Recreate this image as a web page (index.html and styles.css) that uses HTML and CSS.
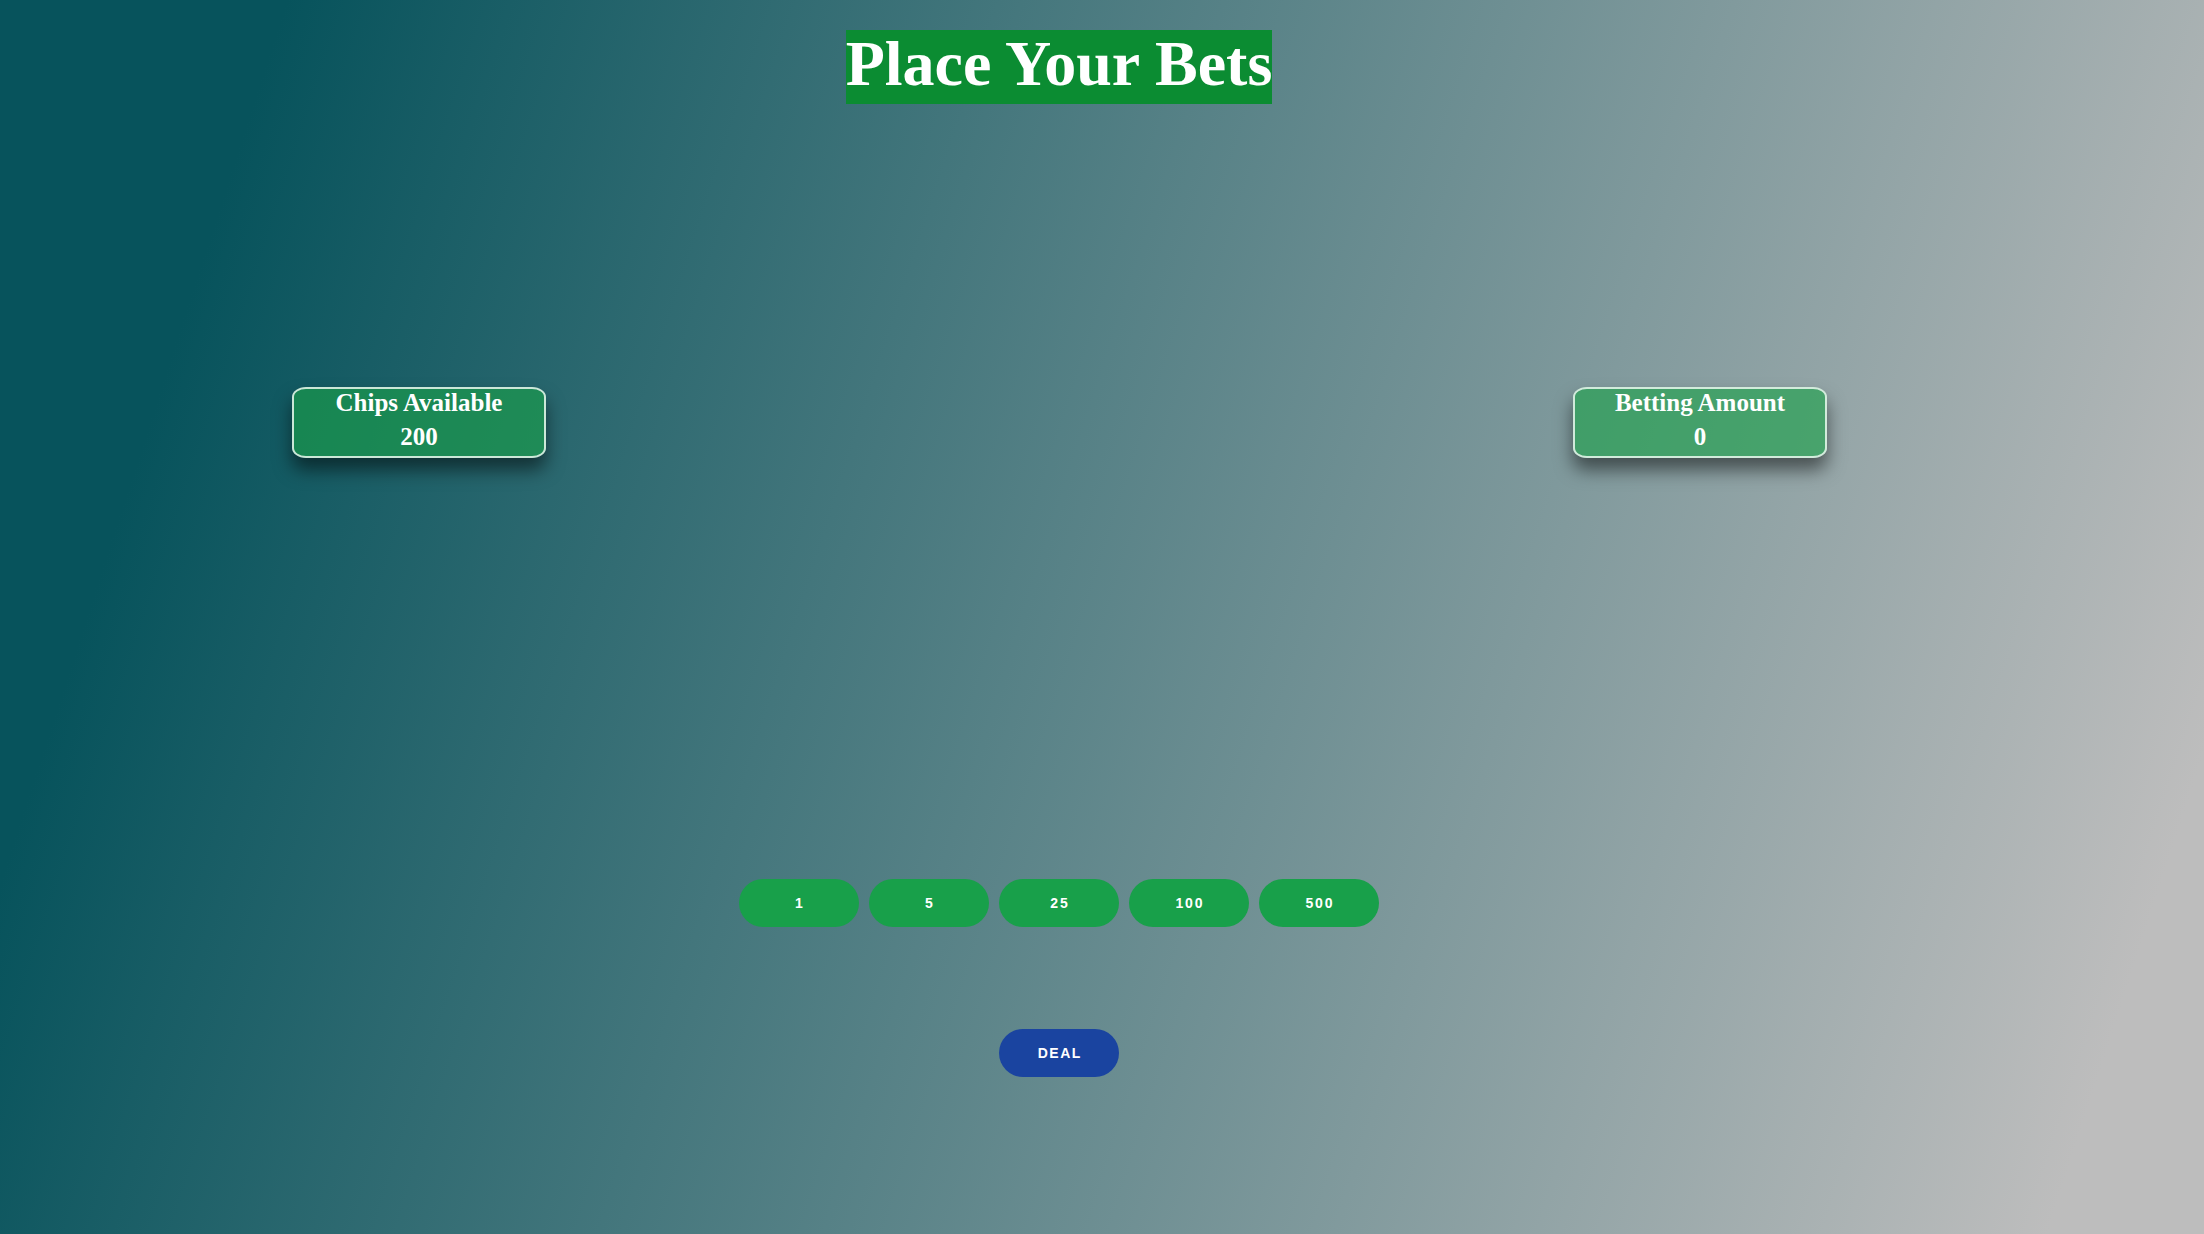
FILE: index.html
```html
<!DOCTYPE html>
<html lang="en">
<head>
<meta charset="utf-8">
<title>Place Your Bets</title>
<link rel="stylesheet" href="styles.css">
</head>
<body>
<main class="table">
  <h1 class="title">Place Your Bets</h1>
  <section class="stats">
    <div class="stat">
      <div class="stat-label">Chips Available</div>
      <div class="stat-value">200</div>
    </div>
    <div class="stat">
      <div class="stat-label">Betting Amount</div>
      <div class="stat-value">0</div>
    </div>
  </section>
  <section class="chips">
    <button class="chip">1</button>
    <button class="chip">5</button>
    <button class="chip">25</button>
    <button class="chip">100</button>
    <button class="chip">500</button>
  </section>
  <section class="actions">
    <button class="deal">DEAL</button>
  </section>
</main>
</body>
</html>
```

FILE: styles.css
```css
html, body {
  margin: 0;
  padding: 0;
}

body {
  min-height: 100vh;
  background: linear-gradient(108deg, #07535c 11%, #bdbdbd 94%);
  font-family: "Liberation Sans", Arial, sans-serif;
}

.table {
  width: 2118px;
  display: flex;
  flex-direction: column;
  align-items: center;
}

.title {
  margin: 30px 0 0;
  padding: 0 0 7px;
  background: #0b8c32;
  color: #ffffff;
  font-family: "Liberation Serif", "Times New Roman", serif;
  font-weight: bold;
  font-size: 64px;
  line-height: 67px;
  white-space: nowrap;
}

.stats {
  align-self: stretch;
  display: flex;
  justify-content: space-between;
  padding: 0 291px 0 292px;
  margin-top: 283px;
}

.stat {
  box-sizing: border-box;
  width: 254px;
  height: 71px;
  border: 2px solid rgba(235, 248, 240, 0.85);
  border-radius: 14px / 10px;
  background: rgba(26, 161, 73, 0.62);
  box-shadow: 0 12px 18px rgba(0, 0, 0, 0.5);
  color: #ffffff;
  font-family: "Liberation Serif", "Times New Roman", serif;
  font-weight: bold;
  font-size: 25px;
  text-align: center;
}

.stat-label {
  line-height: 28px;
}

.stat-value {
  line-height: 39px;
}

.chips {
  display: flex;
  gap: 10px;
  margin-top: 421px;
}

.chip,
.deal {
  width: 120px;
  height: 48px;
  border: none;
  border-radius: 24px;
  padding: 0;
  color: #ffffff;
  font-family: "Liberation Sans", Arial, sans-serif;
  font-weight: bold;
  font-size: 14px;
  letter-spacing: 1.8px;
  text-indent: 1.8px;
}

.chip {
  background: #18a04a;
}

.actions {
  display: flex;
  margin-top: 102px;
}

.deal {
  background: #1a44a0;
  letter-spacing: 1.5px;
  text-indent: 1.5px;
}
```
